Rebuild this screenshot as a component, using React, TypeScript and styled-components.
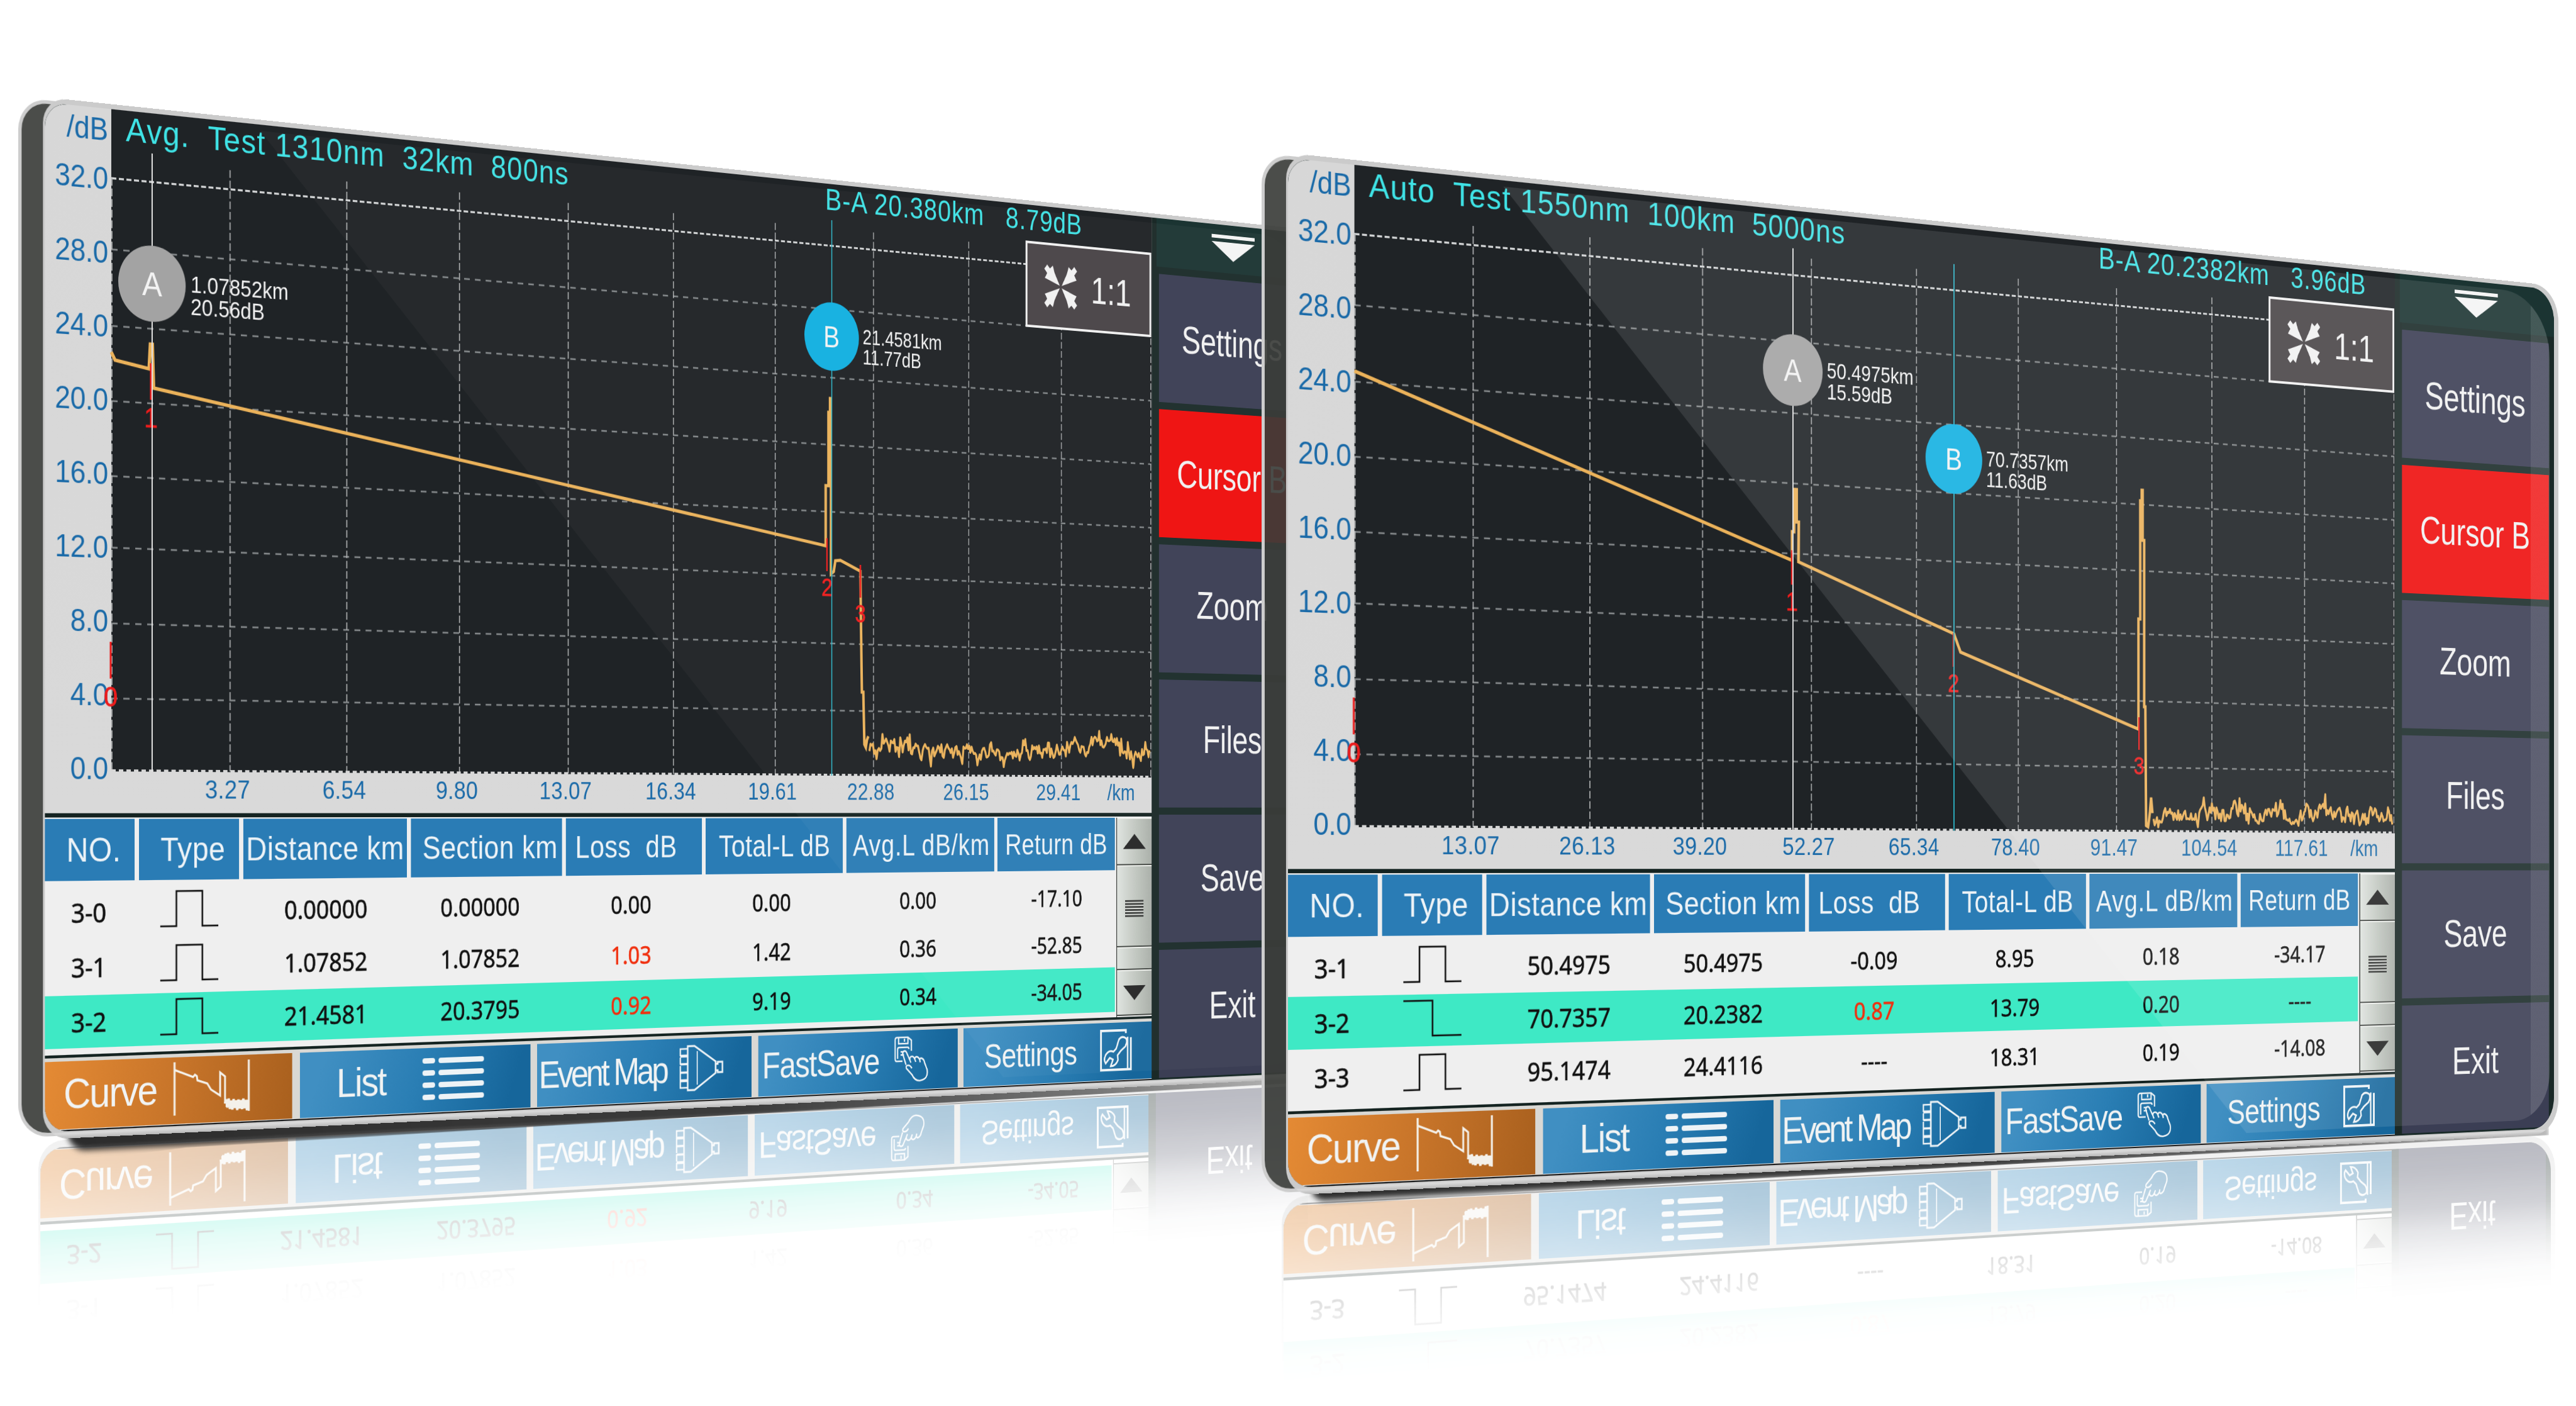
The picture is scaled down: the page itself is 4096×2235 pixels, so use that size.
// App.tsx
import React from "react"

import styled, { createGlobalStyle, css } from "styled-components"

type Pulse = "peak" | "step"

interface EventRow {
  no: string
  type: Pulse
  values: string[]
  lossAlert?: boolean
  selected?: boolean
}

interface Cursor {
  name: "A" | "B"
  x: number
  y: number
  distance: string
  level: string
}

interface Trace {
  title: string
  delta: string
  deltaX: number
  ticks: string[]
  curve: string
  noise: string
  marks: { n: number; x: number; y: number }[]
  cursors: Cursor[]
  rows: EventRow[]
}

const SCALE = 4096 / 4160

// screen face is 2400 x 1440, seen from the left side
const perspective = (left: number, top: number) => {
  const g = 0.2273 / 2400
  const tx = left * SCALE
  const ty = top * SCALE
  const sx = (2498.8 / 2400) * SCALE
  const shear = 0.1084 * SCALE
  const sy = (1663 / 1440) * SCALE
  return `matrix3d(${sx + tx * g}, ${shear + ty * g}, 0, ${g}, 0, ${sy}, 0, 0, 0, 0, 1, 0, ${tx}, ${ty}, 0, 1)`
}

const makeNoise = (
  from: number,
  base: number,
  amp: number,
  floor: number,
  seed: number,
  bump: (x: number) => number
) => {
  let s = seed
  const rand = () => {
    s = (s * 16807) % 2147483647
    return s / 2147483647 - 0.5
  }
  const points: string[] = []
  let slow = 0
  for (let x = from; x <= 2046; x += 2.4) {
    slow = slow * 0.75 + rand() * amp * 0.75
    const spike = Math.abs(rand()) > 0.41 ? rand() * amp * 1.7 : 0
    const y = Math.min(
      floor,
      Math.max(base - 38, base + slow + rand() * amp * 0.65 + spike + bump(x))
    )
    points.push(`${x.toFixed(1)},${y.toFixed(1)}`)
  }
  return points.join(" ")
}

const HEADERS = [
  "NO.",
  "Type",
  "Distance km",
  "Section km",
  "Loss  dB",
  "Total-L dB",
  "Avg.L dB/km",
  "Return dB"
]
const LEVELS = ["32.0", "28.0", "24.0", "20.0", "16.0", "12.0", "8.0", "4.0", "0.0"]
const LEVEL_Y = [97.5, 198, 306, 412, 518, 619, 726, 832]
const GRID_X = [105, 295.3, 490, 684.7, 879.4, 1074, 1268.8, 1463.3, 1658, 1853.5, 2048]
const MENU = ["Settings", "Cursor B", "Zoom", "Files", "Save", "Exit"]

const avgTrace: Trace = {
  title: "Avg.  Test 1310nm  32km  800ns",
  delta: "B-A 20.380km   8.79dB",
  deltaX: 1263,
  ticks: ["3.27", "6.54", "9.80", "13.07", "16.34", "19.61", "22.88", "26.15", "29.41"],
  curve:
    "104,343 110,354 164,363 166,328 169.5,328 171.5,390 1368,572 1368,477 1373.5,477 1373.5,361 1376.5,361 1376.5,339 1378.5,339 1378.5,616 1384,612 1387,595 1397,594 1437,610 1440,802 1443,802 1445,885 1448,890 1450,878 1453,872",
  noise: makeNoise(1455, 892, 21, 919, 4211, x =>
    x < 1480 ? 6 : x > 1915 && x < 1985 ? -14 : 0
  ),
  marks: [
    { n: 0, x: 103, y: 752 },
    { n: 1, x: 167, y: 355 },
    { n: 2, x: 1370.5, y: 560 },
    { n: 3, x: 1437, y: 600 }
  ],
  cursors: [
    { name: "A", x: 169, y: 242, distance: "1.07852km", level: "20.56dB" },
    { name: "B", x: 1379.5, y: 241, distance: "21.4581km", level: "11.77dB" }
  ],
  rows: [
    {
      no: "3-0",
      type: "peak",
      values: ["0.00000", "0.00000", "0.00", "0.00", "0.00", "-17.10"]
    },
    {
      no: "3-1",
      type: "peak",
      values: ["1.07852", "1.07852", "1.03", "1.42", "0.36", "-52.85"],
      lossAlert: true
    },
    {
      no: "3-2",
      type: "peak",
      values: ["21.4581", "20.3795", "0.92", "9.19", "0.34", "-34.05"],
      lossAlert: true,
      selected: true
    }
  ]
}

const autoTrace: Trace = {
  title: "Auto  Test 1550nm  100km  5000ns",
  delta: "B-A 20.2382km   3.96dB",
  deltaX: 1323,
  ticks: ["13.07", "26.13", "39.20", "52.27", "65.34", "78.40", "91.47", "104.54", "117.61"],
  curve:
    "104,291 843,528 844.5,528 844.5,485 848,485 848,421 852.5,421 852.5,470 856.5,470 856,530 1145,630 1157.5,658 1507.5,771 1507.5,595 1511,595 1511,406 1514,406 1514,389 1516,389 1516,469 1519,469 1519,735 1521.5,735 1523,925 1527,927 1531,902 1533,880 1536,905",
  noise: makeNoise(1538, 903, 23, 928, 90733, x => (x < 1580 ? 10 : 0)),
  marks: [
    { n: 0, x: 103, y: 752 },
    { n: 1, x: 844, y: 513 },
    { n: 2, x: 1144, y: 629 },
    { n: 3, x: 1508.5, y: 752 }
  ],
  cursors: [
    { name: "A", x: 845.5, y: 241, distance: "50.4975km", level: "15.59dB" },
    { name: "B", x: 1144.5, y: 359, distance: "70.7357km", level: "11.63dB" }
  ],
  rows: [
    {
      no: "3-1",
      type: "peak",
      values: ["50.4975", "50.4975", "-0.09", "8.95", "0.18", "-34.17"]
    },
    {
      no: "3-2",
      type: "step",
      values: ["70.7357", "20.2382", "0.87", "13.79", "0.20", "----"],
      lossAlert: true,
      selected: true
    },
    {
      no: "3-3",
      type: "peak",
      values: ["95.1474", "24.4116", "----", "18.31", "0.19", "-14.08"]
    }
  ]
}

// Icons
const PulseIcon: React.FC<{ type: Pulse }> = ({ type }) => (
  <svg width="94" height="54" viewBox="0 0 94 54" fill="none" stroke="#111" strokeWidth="2.6">
    <path d={type === "peak" ? "M0 52H26V2H68V52H94" : "M0 2H47V52H94"} />
  </svg>
)

const CurveIcon = () => (
  <svg width="126" height="78" viewBox="0 0 126 78" fill="none" stroke="#f4f1ea" strokeWidth="3">
    <path d="M2 0V76M123 0V74" strokeWidth="3.2" />
    <path d="M2 11L32 22L35 19L38 21L39 27L55 32L61 41L76 50V17L84 23V62" />
    <path
      d="M84 62L86 56L88 68L90 55L92 70L94 58L96 71L98 56L100 69L102 58L104 72L106 57L108 70L110 58L112 71L114 56L116 70L118 58L120 73L122 58M85 65L123 66"
      strokeWidth="4"
    />
  </svg>
)

const ListIcon = () => (
  <svg width="108" height="70" viewBox="0 0 108 70" fill="#eef3f6">
    {[4, 22, 40, 58].map(y => (
      <React.Fragment key={y}>
        <rect x="0" y={y} width="22" height="8" rx="4" />
        <rect x="28" y={y} width="80" height="8" rx="4" />
      </React.Fragment>
    ))}
  </svg>
)

const EventMapIcon = () => (
  <svg width="86" height="72" viewBox="0 0 86 72" fill="none" stroke="#eef3f6" strokeWidth="3">
    <path d="M16 2H29L69 27V45L29 70H16Z" />
    <path d="M69 31H73V28H82V44H73V41H69" />
    <path d="M34 10V62" strokeWidth="2" />
    <path d="M16 6H2V16H16M2 19V29H16M2 32V42H16M16 30H2M16 43H2V54H16M16 56H2V66H16M16 18H2" strokeWidth="2.6" />
  </svg>
)

const FastSaveIcon = () => (
  <svg width="70" height="74" viewBox="0 0 70 74" fill="none" stroke="#eef3f6" strokeWidth="2.6">
    <path d="M17 40H5Q2 40 2 36V6Q2 2 6 2H28L35 7V24" />
    <path d="M9 2V12H28V2M21 4V9M7 36V21Q7 18 10 18H27Q30 18 30 21" />
    <path d="M13 25H20M13 30H20" />
    <path d="M24 46L18 30Q16 25 20 24Q24 23 26 28L32 39Q31 33 36 33Q40 33 42 38Q42 33 47 34Q50 35 52 39Q53 35 57 37Q61 39 62 44L67 55Q70 70 54 72Q43 74 36 62L25 52Q23 47 28 47Q33 47 36 52" />
    <path d="M32 39L34 43M42 38L44 42M52 39L53 43" />
  </svg>
)

const WrenchIcon = () => (
  <svg width="70" height="70" viewBox="0 0 70 70" fill="none" stroke="#eef3f6" strokeWidth="4">
    <path d="M56 7V2H2V67H67V14" />
    <path
      d="M60 13V66M57 16Q48 10 41 17L35 32L29 37Q19 33 12 42Q7 50 12 56L21 47L28 50L23 61Q34 61 39 51L38 43L45 36L55 29Q60 22 57 16Z"
      strokeWidth="3.2"
    />
  </svg>
)

const FitIcon = () => {
  const arrow = "6,0 12,6 18,1 22,13 33,33 1,22 6,14 0,7"
  return (
    <svg width="70" height="70" viewBox="0 0 70 70" fill="#f1f1f1">
      <polygon points={arrow} />
      <polygon points={arrow} transform="translate(70 0) scale(-1 1)" />
      <polygon points={arrow} transform="translate(0 70) scale(1 -1)" />
      <polygon points={arrow} transform="translate(70 70) scale(-1 -1)" />
    </svg>
  )
}

const TABS = [
  { label: "Curve", icon: <CurveIcon />, size: 59, spacing: -2, inset: 29, gap: 27 },
  { label: "List", icon: <ListIcon />, size: 60, spacing: -2.4, inset: 62, gap: 64 },
  { label: "Event Map", icon: <EventMapIcon />, size: 58, spacing: -4.7, inset: 3, gap: 24 },
  { label: "FastSave", icon: <FastSaveIcon />, size: 58, spacing: -1.7, inset: 8, gap: 30 },
  { label: "Settings", icon: <WrenchIcon />, size: 56, spacing: -0.7, inset: 43, gap: 50 }
]

const Graph: React.FC<{ trace: Trace }> = ({ trace }) => (
  <Plot>
    <PlotHeader $split={trace.deltaX}>
      <span>{trace.title}</span>
      <span>{trace.delta}</span>
    </PlotHeader>
    <PlotSvg viewBox="104 0 1946 935">
      {LEVEL_Y.map((y, i) => (
        <line
          key={y}
          x1="104"
          x2="2049"
          y1={y}
          y2={y}
          stroke={i ? "#84888a" : "#cfd1d2"}
          strokeWidth={i ? 2.6 : 3}
          strokeDasharray={i ? "10 9" : "8 4"}
        />
      ))}
      {GRID_X.map((x, i) => (
        <line
          key={x}
          x1={x}
          x2={x}
          y1={i % 10 ? 70 : 97}
          y2="934"
          stroke="#b4b6b7"
          strokeWidth="1.7"
          strokeDasharray="11 4"
        />
      ))}
      <line x1="104" x2="2049" y1="933.5" y2="933.5" stroke="#d6d6d6" strokeWidth="3" strokeDasharray="7 5" />
      <polyline points={trace.curve} fill="none" stroke="#ebb25a" strokeWidth="5" />
      <polyline points={trace.noise} fill="none" stroke="#ebb25a" strokeWidth="4" strokeLinejoin="round" />
      {trace.marks.map(m => (
        <g key={m.n} fill="#ec1c1c">
          <rect x={m.x - 1.5} y={m.y} width="3" height="52" />
          <text x={m.x} y={m.y + 91} textAnchor="middle" fontSize="39" stroke="#ec1c1c" strokeWidth="0.8">
            {m.n}
          </text>
        </g>
      ))}
    </PlotSvg>
    {trace.cursors.map(c => (
      <React.Fragment key={c.name}>
        <CursorLine $x={c.x - 104} $name={c.name} />
        <Marker $x={c.x - 104} $y={c.y}>
          <Knob $name={c.name}>{c.name}</Knob>
          <Reading>
            <span>{c.distance}</span>
            <span>{c.level}</span>
          </Reading>
        </Marker>
      </React.Fragment>
    ))}
    <FitButton>
      <FitIcon />
      <span>1:1</span>
    </FitButton>
  </Plot>
)

const TableRow: React.FC<{ row: EventRow }> = ({ row }) => (
  <Row $selected={row.selected}>
    <span>{row.no}</span>
    <PulseIcon type={row.type} />
    {row.values.map((v, i) => (
      <Value key={i} $alert={i === 2 && row.lossAlert}>
        {v}
      </Value>
    ))}
  </Row>
)

const TabBar = () => (
  <Tabs>
    {TABS.map((t, i) => (
      <Tab key={t.label} $active={i === 0} $size={t.size} $spacing={t.spacing} $inset={t.inset} $gap={t.gap}>
        <span>{t.label}</span>
        {t.icon}
      </Tab>
    ))}
  </Tabs>
)

const Face: React.FC<{ trace: Trace; gloss: boolean }> = ({ trace, gloss }) => (
  <Frame>
    <Screen>
      <Main>
        <ChartPanel>
          <ChartRow>
            <LevelAxis>
              <Unit>/dB</Unit>
              {LEVELS.map(l => (
                <Level key={l}>{l}</Level>
              ))}
            </LevelAxis>
            <Graph trace={trace} />
          </ChartRow>
          <DistanceAxis>
            {trace.ticks.map(t => (
              <span key={t}>{t}</span>
            ))}
            <span>/km</span>
          </DistanceAxis>
        </ChartPanel>
        <TableArea>
          <Table>
            <HeaderRow>
              {HEADERS.map(h => (
                <HeaderCell key={h}>{h}</HeaderCell>
              ))}
            </HeaderRow>
            {trace.rows.map(row => (
              <TableRow key={row.no} row={row} />
            ))}
          </Table>
          <Scrollbar>
            <ScrollPart $size={79}>
              <Arrow />
            </ScrollPart>
            <ScrollPart $size={136}>
              <Grip />
            </ScrollPart>
            <ScrollPart $size={38} />
            <ScrollPart $size={76}>
              <Arrow $down />
            </ScrollPart>
          </Scrollbar>
        </TableArea>
        <TabBar />
      </Main>
      <Sidebar>
        <Collapse>
          <svg width="98" height="44" viewBox="0 0 98 44" fill="#f4f4f4">
            <rect width="98" height="6" />
            <path d="M0 12H98L49 44Z" />
          </svg>
        </Collapse>
        {MENU.map(item => (
          <MenuButton key={item} $active={item === "Cursor B"}>
            {item}
          </MenuButton>
        ))}
      </Sidebar>
      <Gloss $strong={gloss} />
    </Screen>
  </Frame>
)

// only the lower edge of the device shows up on the floor
const Reflection: React.FC<{ trace: Trace }> = ({ trace }) => (
  <Mirror aria-hidden>
    <MirrorScreen>
      <Main>
        <MirrorTable>
          <Table>
            {trace.rows.slice(1).map(row => (
              <TableRow key={row.no} row={row} />
            ))}
          </Table>
          <Scrollbar>
            <ScrollPart $size={40} />
            <ScrollPart $size={38} />
            <ScrollPart $size={76}>
              <Arrow $down />
            </ScrollPart>
          </Scrollbar>
        </MirrorTable>
        <TabBar />
      </Main>
      <Sidebar>
        <MenuButton $active={false}>Exit</MenuButton>
      </Sidebar>
    </MirrorScreen>
  </Mirror>
)

const Device: React.FC<{ trace: Trace; left: number; top: number; gloss?: boolean }> = ({
  trace,
  left,
  top,
  gloss = false
}) => (
  <Plane $matrix={perspective(left, top)}>
    <Reflection trace={trace} />
    <Shadow $soft={gloss} />
    <BackPlate />
    <Face trace={trace} gloss={gloss} />
  </Plane>
)

export default function App() {
  return (
    <Stage>
      <GlobalStyle />
      <Device trace={avgTrace} left={72.5} top={165} />
      <Device trace={autoTrace} left={2080} top={255} gloss />
    </Stage>
  )
}

// Styled
const GlobalStyle = createGlobalStyle`
  body {
    margin: 0;
    background: #fff;
    overflow: hidden;
  }
  * {
    box-sizing: border-box;
  }
`

const Stage = styled.main`
  position: relative;
  width: 4096px;
  height: 2235px;
  overflow: hidden;
  background: #fff;
  font-family: "Liberation Sans", Arial, sans-serif;
  white-space: pre;
`

const Plane = styled.section<{ $matrix: string }>`
  position: absolute;
  left: 0;
  top: 0;
  width: 2400px;
  height: 1440px;
  transform-origin: 0 0;
  transform: ${p => p.$matrix};
`

const Frame = styled.div`
  position: absolute;
  left: -3px;
  top: -7px;
  width: 2425px;
  height: 1457px;
  padding: 7px 10px 10px 3px;
  border-radius: 36px 60px 58px 38px;
  background: linear-gradient(to bottom, #cbcbcb 0 1448px, #dcdcdc 1450px, #b8b8b8);
`

const Mirror = styled.div`
  position: absolute;
  left: -10px;
  top: 1452px;
  width: 2425px;
  height: 277px;
  padding: 0 10px 10px 3px;
  border-radius: 0 0 58px 38px;
  background: #d9d9d9;
  transform: scaleY(-1);
  mask-image: linear-gradient(
    to top,
    rgba(0, 0, 0, 0.36) 0,
    rgba(0, 0, 0, 0.32) 50px,
    rgba(0, 0, 0, 0.23) 112px,
    rgba(0, 0, 0, 0.13) 150px,
    rgba(0, 0, 0, 0.06) 190px,
    rgba(0, 0, 0, 0.015) 225px,
    transparent 260px
  );
`

const Shadow = styled.div<{ $soft: boolean }>`
  position: absolute;
  left: 34px;
  top: 1436px;
  width: 2366px;
  height: ${p => (p.$soft ? 24 : 32)}px;
  background: linear-gradient(to right, #2c2c2c, #3c3c3c 50%, #777 80%, #bbb);
  clip-path: polygon(-1% 0, 100% 0, 100% 64%, 50% 84%, 8% 110%, 2% 140%, -1% 140%);
  border-radius: 0 0 0 30px;
  filter: blur(4px);
`

const BackPlate = styled.div`
  position: absolute;
  left: -41px;
  top: -3px;
  width: 150px;
  height: 1449px;
  border: 5px solid #cdcdcd;
  border-radius: 44px 0 0 46px;
  border-right: 0;
  background: rgba(57, 59, 56, 0.91);
  clip-path: polygon(0 0, 100% 0, 80px 14px, 60px 60px, 60px 1390px, 80px 1440px, 100% 100%, 0 100%);
`

const Screen = styled.div`
  position: relative;
  display: flex;
  width: 2412px;
  height: 1440px;
  border-radius: 34px 54px 52px 36px;
  overflow: hidden;
  background: #1a2927;
`

const MirrorScreen = styled.div`
  display: flex;
  align-items: flex-end;
  width: 2412px;
  height: 267px;
  border-radius: 0 0 52px 36px;
  overflow: hidden;
  background: #1a2927;
`

const Main = styled.div`
  display: flex;
  flex-direction: column;
  width: 2050px;
  background: #142321;
`

const ChartPanel = styled.div`
  height: 994px;
  background: linear-gradient(to bottom, #d7d7d7, #d9d9d9);
`

const ChartRow = styled.div`
  display: flex;
  height: 935px;
`

const LevelAxis = styled.div`
  width: 104px;
  padding-right: 5px;
  color: #1a6aa8;
  font-size: 43.5px;
  text-align: right;
`

const Unit = styled.div`
  height: 47px;
  line-height: 61px;
`

const Level = styled.div`
  height: 104px;
  line-height: 104px;
  letter-spacing: -0.3px;
`

const DistanceAxis = styled.div`
  display: grid;
  grid-template-columns: repeat(9, 194.5px) 90px;
  margin-left: 194px;
  color: #1a6aa8;
  font-size: 37.5px;
  letter-spacing: 0.3px;
  line-height: 50px;
  text-align: center;

  span:last-child {
    padding-left: 8px;
    letter-spacing: 0;
    text-align: left;
  }
`

const Plot = styled.div`
  position: relative;
  width: 1946px;
  height: 935px;
  background: #1f2326;
`

const PlotHeader = styled.div<{ $split: number }>`
  display: grid;
  grid-template-columns: ${p => p.$split}px 1fr;
  height: 54px;
  padding-left: 23px;
  margin-right: -60px;
  color: #3fe3e6;
  font-size: 49px;
  letter-spacing: 1.4px;
  line-height: 53px;

  span:last-child {
    margin-left: -23px;
    letter-spacing: 1.3px;
    line-height: 49px;
  }
`

const PlotSvg = styled.svg`
  position: absolute;
  inset: 0;
  width: 1946px;
  height: 935px;
  overflow: visible;
`

const CursorLine = styled.div<{ $x: number; $name: string }>`
  position: absolute;
  left: ${p => p.$x - 1}px;
  top: 57px;
  width: 2px;
  height: 878px;
  background: ${p => (p.$name === "A" ? "#e4e4e4" : "#2cb3c6")};
`

const Marker = styled.div<{ $x: number; $y: number }>`
  position: absolute;
  left: ${p => p.$x - 54}px;
  top: ${p => p.$y - 54}px;
  display: flex;
  align-items: center;
  gap: 8px;
`

const Knob = styled.div<{ $name: string }>`
  display: flex;
  align-items: center;
  justify-content: center;
  width: 108px;
  height: 108px;
  border-radius: 50%;
  background: ${p => (p.$name === "A" ? "#a3a3a3" : "#12b0e1")};
  color: #f3f3f3;
  font-size: 48px;
`

const Reading = styled.div`
  display: flex;
  flex-direction: column;
  padding-top: 27px;
  color: #f2f2f2;
  font-size: 32.5px;
  line-height: 31.5px;
`

const FitButton = styled.div`
  position: absolute;
  left: 1673px;
  top: 59px;
  display: flex;
  align-items: center;
  width: 272px;
  height: 141px;
  padding-left: 36px;
  gap: 30px;
  border: 4px solid #f0f0f0;
  background: #494447;
  color: #f1f1f1;
  font-size: 63px;
`

const TableArea = styled.div`
  display: flex;
  gap: 3px;
  height: 333px;
  margin-top: 6px;
  border-top: 2px solid #f2f2f2;
  background: #efefef;
`

const MirrorTable = styled.div`
  display: flex;
  gap: 3px;
  height: 160px;
  background: #fff;
`

const columns = css`
  display: grid;
  grid-template-columns: 141px 162px 276px 268px 253px 267px 302px 251px;
  column-gap: 7px;
`

const Table = styled.div`
  width: 1969px;
`

const HeaderRow = styled.div`
  ${columns}
  height: 87px;
  margin-bottom: 7px;
`

const HeaderCell = styled.div`
  display: flex;
  align-items: center;
  justify-content: center;
  background: #2a7cb5;
  color: #edf3f7;
  font-size: 47.5px;
  letter-spacing: 0.5px;

  &:nth-child(-n + 2),
  &:nth-child(4) {
    padding-left: 12px;
  }
  &:nth-child(5) {
    padding-right: 30px;
  }
  &:nth-child(7) {
    letter-spacing: 1.2px;
    padding-left: 4px;
  }
`

const Row = styled.div<{ $selected?: boolean }>`
  ${columns}
  align-items: center;
  justify-items: center;
  height: 74px;
  margin-bottom: 3px;
  background: ${p => (p.$selected ? "#3ee9c5" : "transparent")};
  color: #111;
  font-family: "Noto Sans", "Open Sans", sans-serif;
  font-size: 38px;
  -webkit-text-stroke: 0.6px currentColor;

  svg {
    position: relative;
    top: -3px;
  }
  span:first-child {
    padding-right: 4px;
  }
  span:nth-of-type(3) {
    padding-right: 25px;
  }
`

const Value = styled.span<{ $alert?: boolean }>`
  color: ${p => (p.$alert ? "#f0300f" : "inherit")};
  &:nth-last-child(-n + 4):not(:last-child) {
    padding-right: 13px;
  }
`

const Scrollbar = styled.div`
  display: flex;
  flex-direction: column;
  width: 78px;
  border-left: 2px solid #3c3f3c;
`

const ScrollPart = styled.div<{ $size: number }>`
  display: flex;
  align-items: center;
  justify-content: center;
  height: ${p => p.$size}px;
  border-top: 2px solid #eef0ec;
  border-bottom: 2px solid #3f433f;
  background: linear-gradient(to right, #dfe3df, #c2c8c1 50%, #a9aea8);
`

const Arrow = styled.div<{ $down?: boolean }>`
  width: 50px;
  height: 25px;
  background: #262626;
  clip-path: ${p => (p.$down ? "polygon(0 0, 100% 0, 50% 100%)" : "polygon(50% 0, 100% 100%, 0 100%)")};
`

const Grip = styled.div`
  width: 40px;
  height: 28px;
  margin-top: 8px;
  background: repeating-linear-gradient(to bottom, #3c3e3c 0 2.6px, #d9dcd8 2.6px 5px);
`

const Tabs = styled.div`
  display: grid;
  grid-template-columns: 398px 400px 400px 399px 1fr;
  column-gap: 12.5px;
  height: 103px;
  margin-top: 4px;
  padding-top: 5px;
  border-bottom: 2px solid #1b1b1b;
  background: #d9d8d4;
`

const Tab = styled.div<{
  $active: boolean
  $size: number
  $spacing: number
  $inset: number
  $gap: number
}>`
  display: flex;
  align-items: center;
  gap: ${p => p.$gap}px;
  padding-bottom: 3px;
  padding-left: ${p => p.$inset}px;
  border-bottom: 1px solid #e6e6e6;
  background: ${p =>
    p.$active
      ? "linear-gradient(100deg, #e48a34, #c8752a 50%, #a9601e)"
      : "linear-gradient(110deg, #408fc2 10%, #2a7eb4 50%, #16669b 90%)"};
  color: #f1f3f3;
  font-size: ${p => p.$size}px;
  letter-spacing: ${p => p.$spacing}px;
`

const Sidebar = styled.nav`
  display: flex;
  flex-direction: column;
  gap: 11.5px;
  width: 334px;
  margin-left: 16px;
  background: #1a2b29;
`

const Collapse = styled.div`
  height: 81px;
  margin: 0 -14px 0 -5px;
  padding: 17px 0 0 123px;
  background: #1b3432;
`

const MenuButton = styled.div<{ $active: boolean }>`
  display: flex;
  align-items: center;
  justify-content: center;
  height: 214.5px;
  padding-right: 4px;
  background: ${p => (p.$active ? "#ef0e0d" : "#3b3e54")};
  color: #f1f1f1;
  font-size: 64px;
  letter-spacing: -0.3px;

  &:nth-child(4),
  &:nth-child(5) {
    padding-bottom: 14px;
  }
  &:last-child {
    padding-bottom: 22px;
  }
`

const Gloss = styled.div<{ $strong: boolean }>`
  position: absolute;
  inset: 9px 10px 16px 0;
  border-radius: 0 110px 80px 0;
  clip-path: polygon(345px 0, 100% 0, 100% 100%, 1730px 100%);
  background: ${p =>
    p.$strong
      ? "linear-gradient(to right, transparent 2358px, rgba(255, 255, 255, 0.09) 2358px), rgba(255, 255, 255, 0.1)"
      : "rgba(255, 255, 255, 0.03)"};
`
